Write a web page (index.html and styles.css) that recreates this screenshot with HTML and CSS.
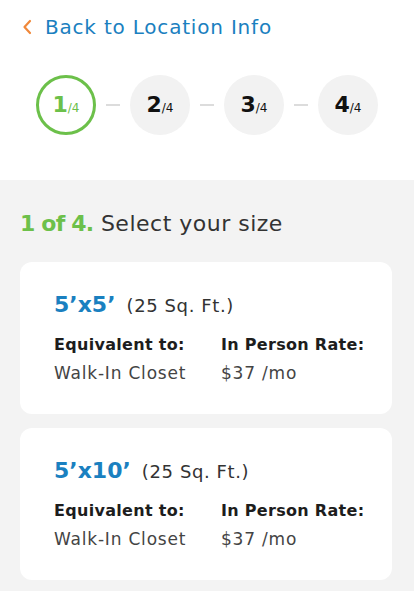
FILE: index.html
```html
<!DOCTYPE html>
<html lang="en">
<head>
  <meta charset="UTF-8">
  <meta name="viewport" content="width=device-width, initial-scale=1.0">
  <title>Select your size</title>
  <link rel="stylesheet" href="styles.css">
</head>
<body>
<div class="top">
  <a class="back-link" href="#">
    <svg class="chevron" width="10" height="16" viewBox="0 0 10 16"><path d="M8 2 L2.5 8 L8 14" fill="none" stroke="#f0883a" stroke-width="2.2" stroke-linecap="round" stroke-linejoin="round"/></svg>
    <span>Back to Location Info</span>
  </a>
  <div class="steps">
    <div class="step active"><b>1</b><small>/4</small></div>
    <span class="dash"></span>
    <div class="step"><b>2</b><small>/4</small></div>
    <span class="dash"></span>
    <div class="step"><b>3</b><small>/4</small></div>
    <span class="dash"></span>
    <div class="step"><b>4</b><small>/4</small></div>
  </div>
</div>

<div class="content">
  <h2 class="heading"><span class="green">1 of 4.</span> Select your size</h2>

  <div class="card">
    <p class="size"><span class="dims">5’x5’</span><span class="sqft">(25 Sq. Ft.)</span></p>
    <div class="info">
      <div class="col">
        <p class="label">Equivalent to:</p>
        <p class="value">Walk-In Closet</p>
      </div>
      <div class="col">
        <p class="label">In Person Rate:</p>
        <p class="value">$37 /mo</p>
      </div>
    </div>
  </div>

  <div class="card">
    <p class="size"><span class="dims">5’x10’</span><span class="sqft">(25 Sq. Ft.)</span></p>
    <div class="info">
      <div class="col">
        <p class="label">Equivalent to:</p>
        <p class="value">Walk-In Closet</p>
      </div>
      <div class="col">
        <p class="label">In Person Rate:</p>
        <p class="value">$37 /mo</p>
      </div>
    </div>
  </div>
</div>
</body>
</html>
```

FILE: styles.css
```css
body {
  margin: 0;
  font-family: "DejaVu Sans", Arial, sans-serif;
  color: #222;
  background-color: white;
}

p, h2 {
  margin: 0;
}

.top {
  padding: 14px 22px 0 22px;
  height: 180px;
  box-sizing: border-box;
}

.back-link {
  display: flex;
  align-items: center;
  gap: 13px;
  color: #1a80c0;
  text-decoration: none;
  font-size: 20px;
  letter-spacing: 0.8px;
  line-height: 26px;
  height: 26px;
}

.steps {
  display: flex;
  align-items: center;
  margin-top: 35px;
  padding-left: 14px;
}

.step {
  width: 60px;
  height: 60px;
  border-radius: 50%;
  background-color: #f2f2f2;
  display: flex;
  align-items: baseline;
  justify-content: center;
  box-sizing: border-box;
  padding-top: 17px;
  color: #111;
}

.step b {
  font-size: 22px;
}

.step small {
  font-size: 12px;
}

.step.active {
  background-color: white;
  border: 3px solid #6cc04a;
  padding-top: 14px;
  color: #6cc04a;
}

.step.active b {
  font-weight: 600;
}

.dash {
  width: 14px;
  height: 2px;
  background-color: #dcdcdc;
  margin: 0 10px;
}

.content {
  background-color: #f3f3f3;
  padding: 30px 22px 12px 20px;
  min-height: 411px;
  box-sizing: border-box;
}

.heading {
  font-size: 22px;
  line-height: 28px;
  font-weight: normal;
  letter-spacing: 0.5px;
  color: #333;
  margin-bottom: 24px;
}

.green {
  color: #6cc04a;
  font-weight: bold;
  letter-spacing: -0.8px;
}

.card {
  background-color: white;
  border-radius: 12px;
  height: 152px;
  box-sizing: border-box;
  padding: 28px 20px 0 34px;
  margin-bottom: 14px;
}

.size {
  display: flex;
  align-items: baseline;
  gap: 11px;
  height: 30px;
  line-height: 30px;
}

.dims {
  color: #1a80c0;
  font-weight: bold;
  font-size: 22px;
}

.sqft {
  font-size: 18px;
  letter-spacing: 0.6px;
  color: #333;
}

.info {
  display: flex;
  margin-top: 15px;
}

.col {
  flex: none;
  width: 167px;
}

.col + .col {
  width: auto;
}

.label {
  font-weight: bold;
  font-size: 16px;
  line-height: 20px;
  letter-spacing: 0.3px;
  color: #1d1d1d;
}

.value {
  font-size: 17px;
  line-height: 20px;
  letter-spacing: 0.8px;
  color: #444;
  margin-top: 8px;
}
```
